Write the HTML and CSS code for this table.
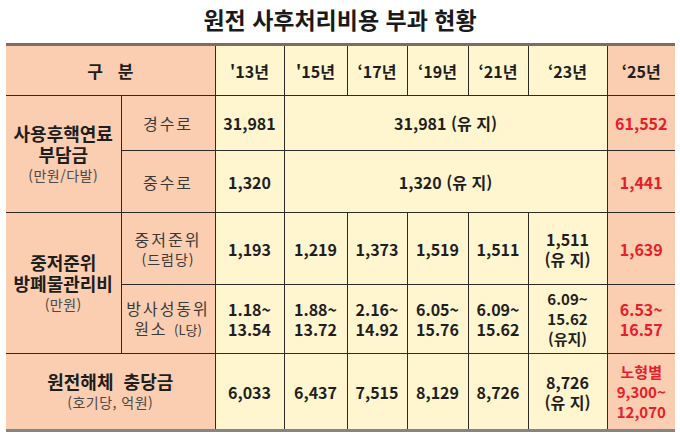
FILE: index.html
```html
<!DOCTYPE html>
<html lang="ko">
<head>
<meta charset="utf-8">
<title>원전 사후처리비용 부과 현황</title>
<link rel="stylesheet" href="styles.css">
</head>
<body>
<h1 class="title">원전 사후처리비용 부과 현황</h1>
<table class="tbl">
  <colgroup>
    <col class="c-a"><col class="c-b"><col class="c-13"><col class="c-15"><col class="c-17"><col class="c-19"><col class="c-21"><col class="c-23"><col class="c-25">
  </colgroup>
  <tr class="r-head">
    <td class="pink head gubun" colspan="2">구 분</td>
    <td class="yel head">'13년</td>
    <td class="yel head">'15년</td>
    <td class="yel head">‘17년</td>
    <td class="yel head">‘19년</td>
    <td class="yel head">‘21년</td>
    <td class="yel head">‘23년</td>
    <td class="pink head">‘25년</td>
  </tr>
  <tr class="r-1">
    <td class="pink label" rowspan="2"><div class="lab-main">사용후핵연료<br>부담금</div><div class="lab-sub">(만원/다발)</div></td>
    <td class="pink sub dot-b">경수로</td>
    <td class="yel num dot-b">31,981</td>
    <td class="yel num dot-b" colspan="5">31,981 (유 지)</td>
    <td class="pink num red dot-b">61,552</td>
  </tr>
  <tr class="r-2">
    <td class="pink sub">중수로</td>
    <td class="yel num">1,320</td>
    <td class="yel num" colspan="5">1,320 (유 지)</td>
    <td class="pink num red">1,441</td>
  </tr>
  <tr class="r-3">
    <td class="pink label" rowspan="2"><div class="lab-main">중저준위<br>방폐물관리비</div><div class="lab-sub">(만원)</div></td>
    <td class="pink sub dot-b"><div>중저준위</div><div class="sub-small">(드럼당)</div></td>
    <td class="yel num dot-b">1,193</td>
    <td class="yel num dot-b">1,219</td>
    <td class="yel num dot-b">1,373</td>
    <td class="yel num dot-b">1,519</td>
    <td class="yel num dot-b">1,511</td>
    <td class="yel num dot-b two">1,511<br>(유 지)</td>
    <td class="pink num red dot-b">1,639</td>
  </tr>
  <tr class="r-4">
    <td class="pink sub two">방사성동위<br>원소 <span class="sub-tiny">(L당)</span></td>
    <td class="yel num two">1.18~<br>13.54</td>
    <td class="yel num two">1.88~<br>13.72</td>
    <td class="yel num two">2.16~<br>14.92</td>
    <td class="yel num two">6.05~<br>15.76</td>
    <td class="yel num two">6.09~<br>15.62</td>
    <td class="yel num three">6.09~<br>15.62<br>(유지)</td>
    <td class="pink num red two">6.53~<br>16.57</td>
  </tr>
  <tr class="r-5">
    <td class="pink label" colspan="2"><div class="lab-main">원전해체&nbsp;&nbsp;충당금</div><div class="lab-sub">(호기당, 억원)</div></td>
    <td class="yel num">6,033</td>
    <td class="yel num">6,437</td>
    <td class="yel num">7,515</td>
    <td class="yel num">8,129</td>
    <td class="yel num">8,726</td>
    <td class="yel num two">8,726<br>(유 지)</td>
    <td class="pink num red three">노형별<br>9,300~<br>12,070</td>
  </tr>
</table>
</body>
</html>
```

FILE: styles.css
```css
html, body {
  margin: 0;
  padding: 0;
  background: #ffffff;
}
body {
  width: 680px;
  height: 439px;
  overflow: hidden;
  font-family: "Noto Sans CJK KR", "Noto Sans", sans-serif;
  color: #222;
}
.title {
  margin: 0;
  height: 43px;
  line-height: 38px;
  font-size: 23px;
  font-weight: 700;
  text-align: center;
  color: #1a1a1a;
}
.tbl {
  margin-left: 6px;
  width: 669px;
  table-layout: fixed;
  border-collapse: collapse;
  border-top: 3px solid #7d6c62;
  border-bottom: 3px solid #858585;
}
.c-a { width: 115px; }
.c-b { width: 94px; }
.c-13 { width: 69px; }
.c-15 { width: 63px; }
.c-17 { width: 60px; }
.c-19 { width: 61px; }
.c-21 { width: 60px; }
.c-23 { width: 79px; }
.c-25 { width: 68px; }
.tbl td {
  padding: 0;
  text-align: center;
  vertical-align: middle;
  border: 1px solid #2d2a28;
  font-size: 16px;
  line-height: 20px;
}
.tbl td:first-child { border-left: none; }
.tbl td:last-child { border-right: none; }
.tbl td.dot-b { border-bottom: 1px dotted #6a6a6a; }
.pink { background: #fbcdb1; }
.yel { background: #fff6cf; }
.r-head td { height: 49px; }
.r-1 td { height: 54px; }
.r-2 td { height: 61px; }
.r-3 td { height: 71px; }
.r-4 td { height: 68px; }
.r-5 td { height: 75px; }
.head {
  font-weight: 700;
  font-size: 16px;
  color: #1e1e1e;
}
.tbl td.gubun {
  font-size: 17px;
  letter-spacing: 5px;
  padding-left: 5px;
}
.label {
  font-weight: 700;
}
.lab-main {
  font-size: 18px;
  line-height: 21px;
  color: #1e1e1e;
}
.lab-sub {
  font-size: 14px;
  line-height: 21px;
  font-weight: 400;
  color: #4a4a4a;
  letter-spacing: 0.5px;
}
.sub {
  font-weight: 400;
  font-size: 17px;
  color: #3a3a3a;
  letter-spacing: 2px;
}
.sub-small {
  font-size: 14px;
  line-height: 20px;
  letter-spacing: 1px;
}
.sub-tiny {
  font-size: 13px;
  letter-spacing: 0;
}
.num {
  font-weight: 700;
  font-size: 16px;
  color: #1f1f1f;
}
.red { color: #e5202b; }
.tbl td.two { line-height: 20px; }
.tbl td.three { line-height: 20px; font-size: 15px; }
```
